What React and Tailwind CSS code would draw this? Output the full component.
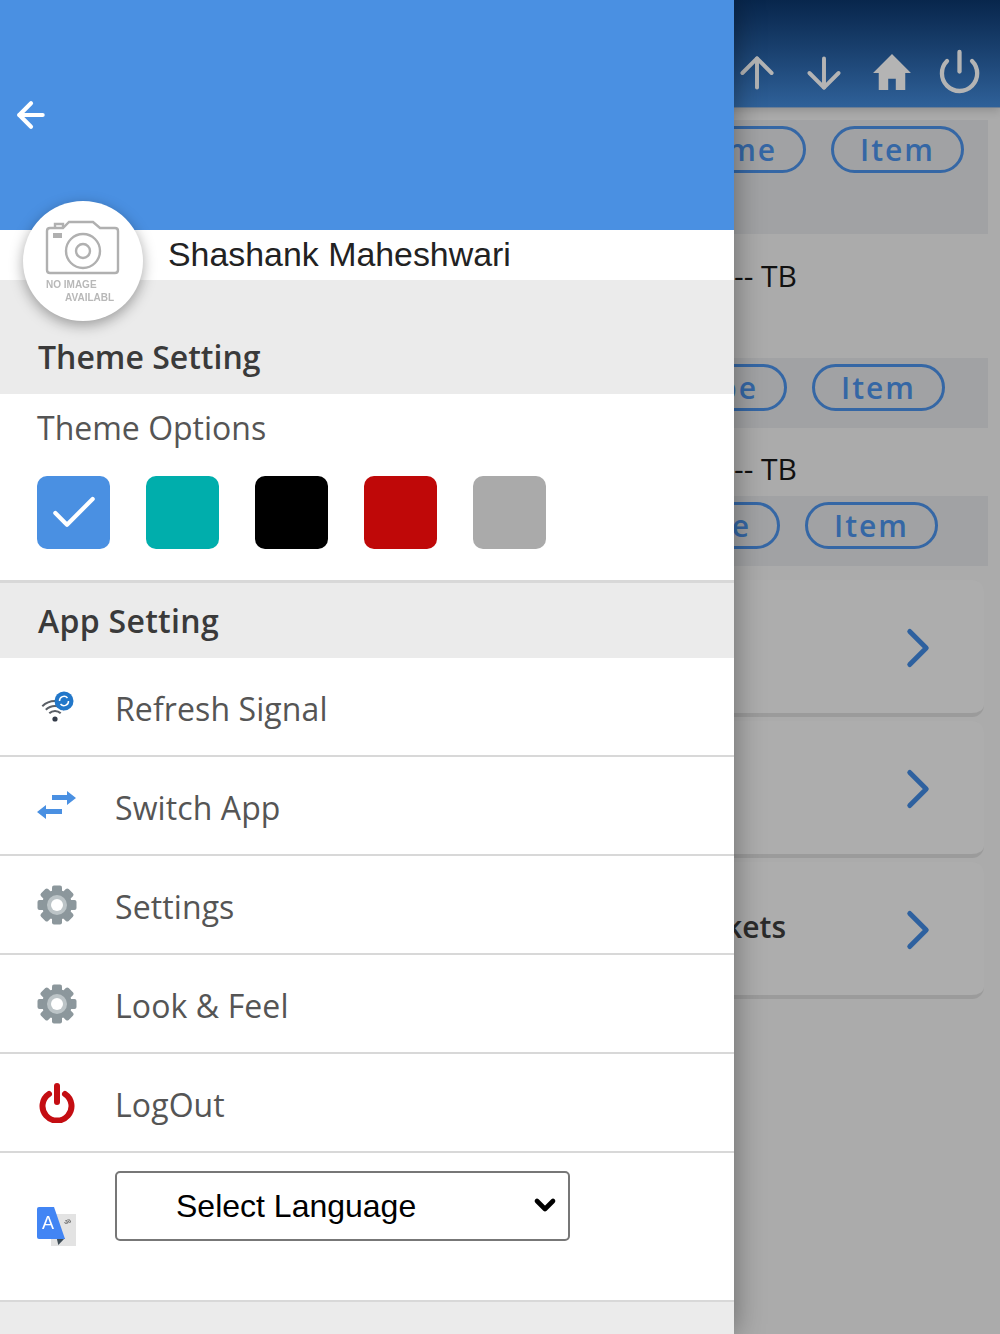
import { ArrowLeft, ArrowUp, ArrowDown, Power, ChevronRight, ChevronDown, Check } from 'lucide-react';

const sans = 'font-["Open_Sans",sans-serif]';
const arial = 'font-["Liberation_Sans",Arial,sans-serif]';

function Pill({ children }) {
  return (
    <div className={`flex h-[47px] items-center rounded-full border-[3px] border-[#3567a5] px-[26px] text-[30px] font-semibold tracking-[2px] text-[#3567a5] ${sans}`}>
      {children}
    </div>
  );
}

function Band({ first, pr, className }) {
  return (
    <div className={`flex w-[988px] justify-end gap-[25px] bg-[#a1a2a4] pt-[6px] ${pr} ${className}`}>
      <Pill>{first}</Pill>
      <Pill>Item</Pill>
    </div>
  );
}

function Card({ label }) {
  return (
    <div className="mt-[4px] flex h-[137px] w-[984px] items-center justify-end rounded-[12px] border-b-[4px] border-[#9b9b9b] bg-[#adadad] pt-[2px] pr-[33px]">
      {label && <span className={`mr-[99px] mb-[6px] text-[30px] font-semibold text-[#2b2b2b] ${sans}`}>{label}</span>}
      <ChevronRight size={66} strokeWidth={1.8} className="text-[#2e619f]" />
    </div>
  );
}

function PageBehind() {
  return (
    <div className="flex flex-col">
      <header className="relative flex h-[108px] items-center justify-end border-b border-[#6d7f95] bg-gradient-to-b from-[#08264c] to-[#2f6199] pt-[36px] pr-[17px] text-[#b4b4b4] shadow-[0_3px_8px_rgba(0,0,0,0.15)]">
        <ArrowUp size={50} strokeWidth={1.9} className="mt-[3px]" />
        <ArrowDown size={50} strokeWidth={1.9} className="mt-[3px] ml-[17px]" />
        <svg width="40" height="36" viewBox="0 0 40 38" fill="currentColor" className="ml-[23px]">
          <path d="M20 0 L40 20 H34 V38 H24 V26 H16 V38 H6 V20 H0 Z" />
        </svg>
        <Power size={47} strokeWidth={2.2} className="ml-[24px]" />
      </header>
      <Band first="Name" pr="pr-[24px]" className="mt-[12px] h-[114px]" />
      <div className={`flex h-[124px] items-start pt-[19px] pl-[734px] text-[30px] text-[#111] ${sans}`}>-- TB</div>
      <Band first="Type" pr="pr-[43px]" className="h-[70px]" />
      <div className={`flex h-[68px] items-start pt-[18px] pl-[734px] text-[30px] text-[#111] ${sans}`}>-- TB</div>
      <Band first="Type" pr="pr-[50px]" className="h-[70px]" />
      <div className="mt-[10px] flex flex-col">
        <Card />
        <Card />
        <Card label="Tickets" />
      </div>
    </div>
  );
}

function Avatar() {
  return (
    <div className="absolute top-[201px] left-[23px] flex h-[120px] w-[120px] items-center justify-center rounded-full bg-white shadow-[0_4px_14px_rgba(0,0,0,0.35)]">
      <svg width="120" height="120" viewBox="0 0 120 120" fill="none" stroke="#b0b0b0" strokeWidth="2.4" className="blur-[0.4px]">
        <path d="M27 27 Q24 27 24 30 V69 Q24 72 27 72 H92 Q95 72 95 69 V30 Q95 27 92 27 H77 L70 21 H46 L40 27 Z" />
        <path d="M32 27 V23 H40 V27" />
        <rect x="30" y="32" width="9" height="5" fill="#b0b0b0" stroke="none" />
        <circle cx="60" cy="50" r="17" />
        <circle cx="60" cy="50" r="7" />
        <text x="23" y="87" fontSize="10" fill="#b8b8b8" stroke="none" fontFamily="Liberation Sans, Arial, sans-serif" fontWeight="700">NO IMAGE</text>
        <text x="42" y="100" fontSize="10" fill="#b8b8b8" stroke="none" fontFamily="Liberation Sans, Arial, sans-serif" fontWeight="700">AVAILABL</text>
      </svg>
    </div>
  );
}

function Swatch({ color, checked }) {
  return (
    <div className={`flex h-[73px] w-[73px] items-center justify-center rounded-[10px] ${color}`}>
      {checked && <Check size={56} strokeWidth={1.8} className="text-white" />}
    </div>
  );
}

function WifiIcon() {
  return (
    <svg width="40" height="40" viewBox="0 0 40 40" fill="none" className="blur-[0.3px]">
      <path d="M5.3 19.3 A18 18 0 0 1 30.7 19.3" stroke="#5a5f66" strokeWidth="2" />
      <path d="M8.8 22.8 A13 13 0 0 1 27.2 22.8" stroke="#5a5f66" strokeWidth="2" />
      <path d="M12.3 26.3 A8 8 0 0 1 23.7 26.3" stroke="#5a5f66" strokeWidth="2" />
      <circle cx="18" cy="32" r="2.6" fill="#333b48" />
      <circle cx="27" cy="14" r="9.5" fill="#2277c9" />
      <path d="M22.5 14 a4.5 4.5 0 0 1 8 -3 M31.5 14 a4.5 4.5 0 0 1 -8 3" stroke="white" strokeWidth="1.5" />
    </svg>
  );
}

function SwitchIcon() {
  return (
    <svg width="40" height="30" viewBox="0 0 40 30" fill="#4a90e2" className="blur-[0.4px]">
      <path d="M15 4 H30 V0 L39 7 L30 14 V9 H15 Z" />
      <path d="M25 18 H9 V14 L0 21 L9 28 V23 H25 Z" />
    </svg>
  );
}

function GearIcon() {
  const teeth = [0, 45, 90, 135];
  return (
    <svg width="40" height="40" viewBox="0 0 40 40" className="blur-[0.4px]">
      {teeth.map((a) => (
        <rect key={a} x="15" y="0.5" width="10" height="39" rx="2" fill="#8c979c" transform={`rotate(${a} 20 20)`} />
      ))}
      <circle cx="20" cy="20" r="15" fill="#8c979c" />
      <circle cx="20" cy="20" r="10" fill="#bcc4c7" />
      <circle cx="20" cy="20" r="6" fill="white" />
    </svg>
  );
}

function LogoutIcon() {
  return (
    <svg width="36" height="40" viewBox="0 0 36 40" fill="none" stroke="#c40d12" strokeLinecap="round" className="blur-[0.4px]">
      <path d="M10 11 A14.5 14.5 0 1 0 26 11" strokeWidth="6" />
      <path d="M18 3 V19" strokeWidth="6" />
    </svg>
  );
}

function TranslateIcon() {
  return (
    <svg width="40" height="40" viewBox="0 0 40 40" className="blur-[0.3px]">
      <rect x="14" y="7" width="25" height="32" fill="#e3e3e3" />
      <text x="27" y="17" fontSize="7" fontWeight="700" fill="#666" fontFamily="Noto Sans, Liberation Sans, sans-serif">ॐ</text>
      <path d="M19.7 31 H28 L21.3 38 Z" fill="#3d4b55" />
      <path d="M2 0 Q0 0 0 2 V30 Q0 32 2 32 H28 L17 0 Z" fill="#4285f4" />
      <text x="5" y="22" fontSize="18" fill="white" fontFamily="Liberation Sans, Arial, sans-serif">A</text>
    </svg>
  );
}

const menu = [
  { label: 'Refresh Signal', icon: <WifiIcon /> },
  { label: 'Switch App', icon: <SwitchIcon /> },
  { label: 'Settings', icon: <GearIcon /> },
  { label: 'Look & Feel', icon: <GearIcon /> },
  { label: 'LogOut', icon: <LogoutIcon /> },
];

function Drawer() {
  return (
    <aside className="absolute top-0 left-0 flex h-full w-[734px] flex-col bg-[#ebebeb] shadow-[0_0_28px_rgba(0,0,0,0.4)]">
      <div className="flex h-[230px] items-center bg-[#4a90e2] pl-[11px] text-white">
        <ArrowLeft size={40} strokeWidth={2.5} />
      </div>
      <div className={`flex h-[50px] items-center bg-white pb-[2px] pl-[168px] text-[33.9px] text-[#222] ${arial}`}>
        Shashank Maheshwari
      </div>
      <div className={`flex h-[114px] items-end bg-[#ebebeb] pb-[13px] pl-[38px] text-[32px] font-semibold text-[#3a3a3a] ${sans}`}>
        Theme Setting
      </div>
      <div className="flex h-[189px] flex-col border-b-[3px] border-[#d8d8d8] bg-white pl-[37px]">
        <div className={`pt-[10px] text-[32px] text-[#555] ${sans}`}>Theme Options</div>
        <div className="mt-[24px] flex gap-[36px]">
          <Swatch color="bg-[#4a90e2]" checked />
          <Swatch color="bg-[#00aeac]" />
          <Swatch color="bg-black" />
          <Swatch color="bg-[#bf0808]" />
          <Swatch color="bg-[#aaaaaa]" />
        </div>
      </div>
      <div className={`flex h-[75px] items-center bg-[#ebebeb] pl-[38px] text-[32px] font-semibold tracking-[0.3px] text-[#3a3a3a] ${sans}`}>
        App Setting
      </div>
      {menu.map((m) => (
        <div key={m.label} className="flex h-[99px] items-start border-b-2 border-[#d8d8d8] bg-white">
          <div className="flex h-[97px] w-[115px] items-center justify-center pr-[2px]">{m.icon}</div>
          <span className={`pt-[27px] text-[32px] tracking-[0.1px] text-[#555] ${sans}`}>{m.label}</span>
        </div>
      ))}
      <div className="flex h-[149px] items-start border-b-2 border-[#d8d8d8] bg-white">
        <div className="flex w-[115px] justify-center pt-[54px] pr-[2px]"><TranslateIcon /></div>
        <div className="relative mt-[18px]">
          <select className={`h-[70px] w-[455px] appearance-none rounded-[5px] border-[2px] border-[#777] bg-white pl-[59px] text-[32px] text-black ${arial}`}>
            <option>Select Language</option>
          </select>
          <ChevronDown size={32} strokeWidth={3.5} className="absolute top-[18px] right-[9px] text-black" />
        </div>
      </div>
    </aside>
  );
}

export default function App() {
  return (
    <div className="relative h-[1334px] w-[1000px] overflow-hidden bg-[#ababab]">
      <PageBehind />
      <Drawer />
      <Avatar />
    </div>
  );
}
